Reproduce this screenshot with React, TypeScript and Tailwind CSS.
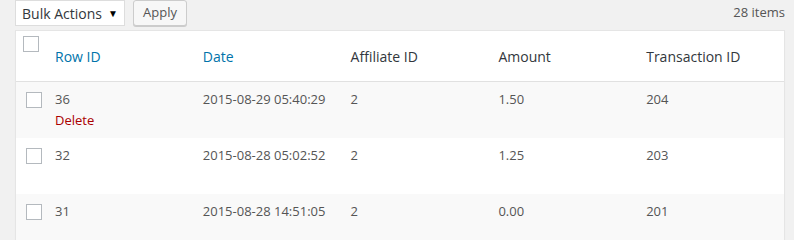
export default function App() {
  const rows = [
    { id: "36", date: "2015-08-29 05:40:29", affiliate: "2", amount: "1.50", txn: "204", actions: true },
    { id: "32", date: "2015-08-28 05:02:52", affiliate: "2", amount: "1.25", txn: "203", actions: false },
    { id: "31", date: "2015-08-28 14:51:05", affiliate: "2", amount: "0.00", txn: "201", actions: false },
  ]

  return (
    <div
      className="min-h-[240px] bg-[#f1f1f1] pl-[15px] pr-[9px] text-[13px] text-[#555]"
      style={{ fontFamily: '"Open Sans", "Liberation Sans", sans-serif' }}
    >
      {/* Top nav */}
      <div className="flex h-[26px] items-center">
        <div className="flex h-[26px] w-[110px] items-center justify-between border border-[#ddd] bg-white pl-[6px] pr-[6px] text-[14px] text-[#32373c]">
          <span>Bulk Actions</span>
          <span className="text-[10px] text-black">▼</span>
        </div>
        <button className="ml-[8px] h-[26px] w-[54px] rounded-[3px] border border-[#ccc] bg-[#f7f7f7] text-[13px] text-[#555] shadow-[0_1px_0_#ccc]">
          Apply
        </button>
        <div className="ml-auto text-[13px] text-[#555]">28 items</div>
      </div>

      {/* Table */}
      <div className="mt-[4px] border border-[#e5e5e5] bg-white shadow-[0_1px_1px_rgba(0,0,0,0.04)]">
        <div className="flex h-[51px] border-b border-[#e1e1e1]">
          <div className="w-[29px] shrink-0 pl-[7px] pt-[5px]">
            <div className="h-[16px] w-[16px] border border-[#b4b9be] bg-white" />
          </div>
          <div className="grid flex-1 grid-cols-5 items-center text-[14px]">
            <div className="pl-[10px] text-[#0073aa]">Row ID</div>
            <div className="pl-[10px] text-[#0073aa]">Date</div>
            <div className="pl-[10px] text-[#32373c]">Affiliate ID</div>
            <div className="pl-[10px] text-[#32373c]">Amount</div>
            <div className="pl-[10px] text-[#32373c]">Transaction ID</div>
          </div>
        </div>
        {rows.map((row, i) => (
          <div key={row.id} className={`flex h-[56px] ${i % 2 === 0 ? "bg-[#f9f9f9]" : "bg-white"}`}>
            <div className="w-[29px] shrink-0 pl-[10px] pt-[10px]">
              <div className="h-[16px] w-[16px] border border-[#b4b9be] bg-white" />
            </div>
            <div className="grid flex-1 grid-cols-5 pt-[8px] leading-[19.5px]">
              <div className="pl-[10px]">
                <div>{row.id}</div>
                {row.actions && <div className="pt-[1px] text-[#a00]">Delete</div>}
              </div>
              <div className="pl-[10px]">{row.date}</div>
              <div className="pl-[10px]">{row.affiliate}</div>
              <div className="pl-[10px]">{row.amount}</div>
              <div className="pl-[10px]">{row.txn}</div>
            </div>
          </div>
        ))}
      </div>
    </div>
  )
}
